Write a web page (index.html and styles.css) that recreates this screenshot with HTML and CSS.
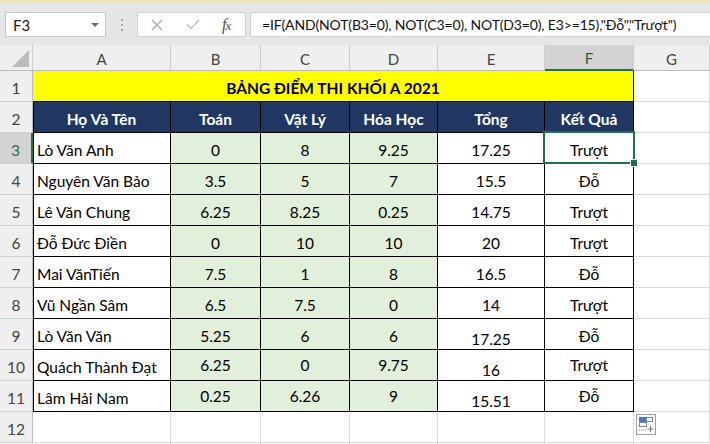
FILE: index.html
```html
<!DOCTYPE html>
<html lang="vi">
<head>
<meta charset="utf-8">
<title>Bảng điểm</title>
<link rel="stylesheet" href="styles.css">
</head>
<body>
<div class="app">
  <div class="topline"></div>
  <div class="fbar">
    <div class="namebox"><span>F3</span><span class="caret"></span></div>
    <div class="dots"><i></i><i></i><i></i></div>
    <div class="fxbox">
      <svg class="ic-x" width="12" height="12" viewBox="0 0 12 12"><path d="M1 1L11 11M11 1L1 11" stroke="#a9a9a9" stroke-width="1.3" fill="none"/></svg>
      <svg class="ic-ok" width="14" height="11" viewBox="0 0 14 11"><path d="M1 5.5L5 9.5L13 1" stroke="#bdbdbd" stroke-width="1.4" fill="none"/></svg>
      <span class="fx"><i>f</i><i class="xx">x</i></span>
    </div>
    <div class="formula">=IF(AND(NOT(B3=0), NOT(C3=0), NOT(D3=0), E3&gt;=15),"Đỗ","Trượt")</div>
  </div>
  <div class="sheet">
    <div class="grid">
      <div class="h corner"><svg width="18" height="18" viewBox="0 0 18 18"><path d="M17 0V17H0Z" fill="#bcbcbc"/></svg></div>
      <div class="h">A</div><div class="h">B</div><div class="h">C</div><div class="h">D</div><div class="h">E</div><div class="h hsel">F</div><div class="h">G</div>

      <div class="rn">1</div>
      <div class="c t title">BẢNG ĐIỂM THI KHỐI A 2021</div>
      <div class="c"></div>

      <div class="rn">2</div>
      <div class="c t hd first">Họ Và Tên</div><div class="c t hd">Toán</div><div class="c t hd">Vật Lý</div><div class="c t hd">Hóa Học</div><div class="c t hd">Tổng</div><div class="c t hd">Kết Quả</div>
      <div class="c"></div>

      <div class="rn rsel">3</div>
      <div class="c t nm first">Lò Văn Anh</div><div class="c t g">0</div><div class="c t g">8</div><div class="c t g">9.25</div><div class="c t">17.25</div><div class="c t sel">Trượt</div>
      <div class="c"></div>

      <div class="rn">4</div>
      <div class="c t nm first">Nguyên Văn Bảo</div><div class="c t g">3.5</div><div class="c t g">5</div><div class="c t g">7</div><div class="c t">15.5</div><div class="c t">Đỗ</div>
      <div class="c"></div>

      <div class="rn">5</div>
      <div class="c t nm first">Lê Văn Chung</div><div class="c t g">6.25</div><div class="c t g">8.25</div><div class="c t g">0.25</div><div class="c t">14.75</div><div class="c t">Trượt</div>
      <div class="c"></div>

      <div class="rn">6</div>
      <div class="c t nm first">Đỗ Đức Điền</div><div class="c t g">0</div><div class="c t g">10</div><div class="c t g">10</div><div class="c t">20</div><div class="c t">Trượt</div>
      <div class="c"></div>

      <div class="rn">7</div>
      <div class="c t nm first">Mai VănTiến</div><div class="c t g">7.5</div><div class="c t g">1</div><div class="c t g">8</div><div class="c t">16.5</div><div class="c t">Đỗ</div>
      <div class="c"></div>

      <div class="rn">8</div>
      <div class="c t nm first">Vũ Ngần Sâm</div><div class="c t g">6.5</div><div class="c t g">7.5</div><div class="c t g">0</div><div class="c t">14</div><div class="c t">Trượt</div>
      <div class="c"></div>

      <div class="rn">9</div>
      <div class="c t nm first">Lò Văn Văn</div><div class="c t g">5.25</div><div class="c t g">6</div><div class="c t g">6</div><div class="c t low">17.25</div><div class="c t">Đỗ</div>
      <div class="c"></div>

      <div class="rn">10</div>
      <div class="c t nm first">Quách Thành Đạt</div><div class="c t g mid">6.25</div><div class="c t g mid">0</div><div class="c t g mid">9.75</div><div class="c t low">16</div><div class="c t mid">Trượt</div>
      <div class="c"></div>

      <div class="rn">11</div>
      <div class="c t nm first">Lâm Hải Nam</div><div class="c t g mid">0.25</div><div class="c t g mid">6.26</div><div class="c t g mid">9</div><div class="c t low">15.51</div><div class="c t mid">Đỗ</div>
      <div class="c"></div>

      <div class="rn">12</div>
      <div class="c"></div><div class="c"></div><div class="c"></div><div class="c"></div><div class="c"></div><div class="c"></div><div class="c"></div>
    </div>
    <div class="paste">
      <svg width="20" height="21" viewBox="0 0 20 21">
        <rect x="0.5" y="0.5" width="19" height="20" fill="#fbfbfb" stroke="#a0a0a0"/>
        <rect x="3" y="3" width="7" height="5" fill="#4a78c8"/>
        <rect x="10.5" y="3.5" width="6" height="4" fill="none" stroke="#8a8a8a"/>
        <rect x="3.5" y="8.5" width="7" height="4" fill="none" stroke="#8a8a8a"/>
        <path d="M3 16H11" stroke="#8a8a8a" stroke-dasharray="1 1"/>
        <path d="M14.5 12V18M11.5 15H17.5" stroke="#7a7a7a"/>
      </svg>
    </div>
  </div>
</div>
</body>
</html>
```
FILE: styles.css
```css
* { box-sizing: border-box; }
html, body { margin: 0; padding: 0; }
body {
  width: 710px;
  height: 444px;
  overflow: hidden;
  background: #ffffff;
  font-family: Lato, "Open Sans", "Liberation Sans", sans-serif;
  color: #000;
}
.app { width: 710px; height: 444px; overflow: hidden; }
.topline { height: 1px; background: #ece6a0; }
.fbar {
  height: 44px;
  background: #e6e6e6;
  display: flex;
  align-items: flex-start;
  padding-top: 11px;
}
.namebox {
  margin-left: 5px;
  width: 101px;
  height: 25px;
  background: #fff;
  border: 1px solid #c9c9c9;
  display: flex;
  align-items: center;
  justify-content: space-between;
  padding: 0 6px 0 7px;
  font-size: 15px;
  color: #222;
}
.caret {
  width: 0; height: 0;
  border-left: 4px solid transparent;
  border-right: 4px solid transparent;
  border-top: 4px solid #6e6e6e;
}
.dots {
  width: 31px;
  height: 25px;
  display: flex;
  flex-direction: column;
  align-items: center;
  justify-content: center;
  gap: 3px;
}
.dots i { width: 2px; height: 2px; background: #a5a5a5; display: block; }
.fxbox {
  width: 109px;
  height: 25px;
  background: #fff;
  border: 1px solid #d2d2d2;
  display: flex;
  align-items: center;
  padding-left: 13px;
}
.ic-x { margin-right: 23px; }
.ic-ok { margin-right: 22px; }
.fx {
  font-family: "Liberation Serif", serif;
  font-size: 16px;
  color: #505050;
  letter-spacing: -1px;
}
.fx .xx { font-size: 13px; }
.formula {
  margin-left: 4px;
  flex: 1;
  height: 25px;
  background: #fff;
  border: 1px solid #d2d2d2;
  border-right: none;
  padding-left: 11px;
  font-size: 14px;
  letter-spacing: -0.15px;
  line-height: 23px;
  color: #111;
  white-space: nowrap;
  overflow: hidden;
}
.sheet { position: relative; }
.grid {
  display: grid;
  grid-template-columns: 33px 138px 90px 89px 88px 107px 89px 1fr;
  grid-template-rows: 26px repeat(12, 31px);
  font-size: 15.5px;
}
.h {
  background: #efefef;
  border-right: 1px solid #cdcdcd;
  border-bottom: 1px solid #bcbcbc;
  display: flex;
  align-items: center;
  justify-content: center;
  font-size: 15px;
  color: #444;
  padding-top: 2px;
}
.h.corner { align-items: flex-end; justify-content: flex-end; padding: 0 2px 2px 0; }
.h.corner svg { display: block; }
.h.hsel {
  background: #d3d3d3;
  border-bottom: 2px solid #217346;
  color: #2a5e3f;
}
.rn {
  background: #efefef;
  border-right: 1px solid #bcbcbc;
  border-bottom: 1px solid #d0d0d0;
  display: flex;
  align-items: center;
  justify-content: center;
  padding-top: 3px;
  font-size: 15.5px;
  color: #444;
}
.rn.rsel {
  background: #d3d3d3;
  color: #217346;
  border-right: 2px solid #217346;
}
.c {
  border-right: 1px solid #dadada;
  border-bottom: 1px solid #dadada;
  display: flex;
  align-items: center;
  justify-content: center;
  padding-top: 3px;
  white-space: nowrap;
}
.c.t { border-right-color: #000; border-bottom-color: #000; }
.c.first { box-shadow: inset 1px 0 0 #000; }
.title {
  grid-column: 2 / 8;
  background: #ffff00;
  font-weight: 700;
  font-size: 15.5px;
}
.hd {
  background: #203764;
  color: #fff;
  font-weight: 700;
  font-size: 15.5px;
}
.nm { justify-content: flex-start; padding-left: 4px; }
.g { background: #e2efda; }
.c.mid { padding-top: 0; }
.c.low { padding-top: 9px; }
.c.sel { position: relative; }
.c.sel::before {
  content: "";
  position: absolute;
  left: -2px; top: -2px; right: -2px; bottom: -1px;
  border: 2px solid #217346;
}
.c.sel::after {
  content: "";
  position: absolute;
  right: -5px; bottom: -4px;
  width: 6px; height: 6px;
  background: #217346;
  border: 1px solid #fff;
}
.paste {
  position: absolute;
  left: 636px;
  top: 369px;
  width: 20px;
  height: 21px;
}
.paste svg { display: block; }
```
